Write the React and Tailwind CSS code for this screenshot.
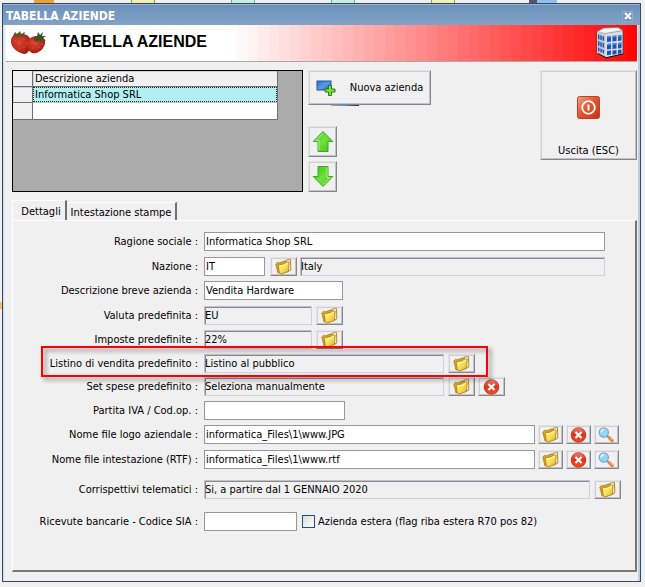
import { useState } from 'react'

const raised =
  'flex shrink-0 items-center justify-center bg-[#f0f0f0] border border-t-[#e4e4e4] border-l-[#e4e4e4] border-r-[#85858b] border-b-[#85858b] shadow-[inset_1px_1px_0_#cfcfd6,inset_-1px_-1px_0_#c2c2c6]'
const sunken =
  'h-[19px] bg-[#f0f0f0] border border-t-[#c0c0c6] border-l-[#c0c0c6] border-r-[#cfcfd8] border-b-[#cfcfd8] shadow-[inset_1px_1px_0_#8a8a8e] outline-none min-w-0'
const white = 'h-[19px] bg-white border border-[#97979c] px-px outline-none min-w-0'

function Folder() {
  return (
    <svg width="17" height="16" viewBox="0 0 17 16">
      <defs>
        <linearGradient id="fold" x1="0" y1="0" x2="1" y2="1">
          <stop offset="0" stopColor="#fff27a" />
          <stop offset="0.5" stopColor="#f8e05c" />
          <stop offset="1" stopColor="#dcaa20" />
        </linearGradient>
      </defs>
      <path d="M11 1.200l4.500-.7.300 10.500-3 1.500z" fill="#fffef2" stroke="#a87c14" strokeWidth=".9" />
      <path d="M.8 5l1.700-1.600 1.700.5L10 1.800l1 .8v9L3 14z" fill="#d8a428" stroke="#a87818" strokeWidth=".8" />
      <path d="M3.200 6.500l1.300-.9 5-.8 1.300-1.500 3.400-.4-.7 9.600-7.500 2.500-1.700-1z" fill="url(#fold)" stroke="#b08018" strokeWidth=".9" />
      <path d="M4.600 7l5.200-1 1.400-1.600 2-.3" stroke="#fffbc8" strokeWidth=".9" fill="none" />
    </svg>
  )
}

function Cancel() {
  return (
    <svg width="17" height="16" viewBox="0 0 16 16">
      <defs>
        <linearGradient id="red" x1="0" y1="0" x2="0" y2="1">
          <stop offset="0" stopColor="#f08a74" />
          <stop offset="0.45" stopColor="#e03018" />
          <stop offset="1" stopColor="#ff4a24" />
        </linearGradient>
      </defs>
      <circle cx="8" cy="8" r="7.300" fill="url(#red)" stroke="#b8342a" strokeWidth=".9" />
      <path d="M5.700 5.700l4.600 4.600M10.300 5.700l-4.600 4.600" stroke="#fff" strokeWidth="2.200" strokeLinecap="square" />
    </svg>
  )
}

function Lens() {
  return (
    <svg width="17" height="16" viewBox="0 0 17 16">
      <path d="M8.500 8.500l2.500 2" stroke="#7d8b9a" strokeWidth="2" />
      <path d="M11.200 10.600l3 3" stroke="#e8833a" strokeWidth="3.200" strokeLinecap="round" />
      <path d="M11.600 10.200l2.800 2.800" stroke="#ffc48c" strokeWidth="1" />
      <circle cx="5.800" cy="5.500" r="4.600" fill="#8fd6fa" stroke="#86a4bc" strokeWidth="1.200" />
      <path d="M3 5.500a3 3 0 0 1 3-3" stroke="#e6f8ff" strokeWidth="1.500" fill="none" />
    </svg>
  )
}

function Arrow({ down }) {
  return (
    <svg width="22" height="23" viewBox="0 0 22 23" className={down ? 'rotate-180' : ''}>
      <defs>
        <linearGradient id="green" x1="0" y1="0" x2="1" y2="1">
          <stop offset="0" stopColor="#5ccf2c" />
          <stop offset="0.5" stopColor="#6fe03a" />
          <stop offset="1" stopColor="#3db81c" />
        </linearGradient>
      </defs>
      <path d="M11 1.500L20.800 11.500H16V21.500H6V11.500H1.200z" fill="url(#green)" stroke="#3fa52c" strokeLinejoin="round" />
      <path d="M11 3.200L4 10.500h3V20.500" fill="none" stroke="#a4f078" strokeWidth="1" />
    </svg>
  )
}

function Strawberries() {
  return (
    <svg width="36" height="25" viewBox="0 0 36 25">
      <defs>
        <radialGradient id="berry" cx=".4" cy=".4" r=".7">
          <stop offset="0" stopColor="#dc452e" />
          <stop offset="0.600" stopColor="#bd2a1c" />
          <stop offset="1" stopColor="#861a14" />
        </radialGradient>
      </defs>
      <path d="M0 9C1 4 5 2 11 3c6 0 9 4 9 9 0 6-3 11-7 11C8 22-1 17 0 9z" fill="url(#berry)" />
      <path d="M17 10c2-5 9-6 14-4 4 2 4 7 1 11-2 4-8 6-11 5-4-2-6-7-4-12z" fill="url(#berry)" />
      <path d="M2 5l2-4 2 2 3-3 1 3 4-2-1 3 4 1-5 1-3-1-2 2-2-2z" fill="#5c5424" />
      <path d="M22 7l4-2 1-4 2 3 3-3-1 4 4 0-3 2 3 3-4-1-1 3-2-3-3 2z" fill="#3d5420" />
      <g fill="#e8835a">
        <circle cx="4" cy="10" r=".6" /><circle cx="8" cy="12" r=".6" /><circle cx="13" cy="8" r=".6" />
        <circle cx="8" cy="17" r=".6" /><circle cx="13" cy="16" r=".6" /><circle cx="16" cy="12" r=".6" />
        <circle cx="21" cy="11" r=".6" /><circle cx="25" cy="13" r=".6" /><circle cx="22" cy="17" r=".6" />
        <circle cx="28" cy="16" r=".6" /><circle cx="31" cy="13" r=".6" />
      </g>
    </svg>
  )
}

function Building() {
  return (
    <svg width="28" height="32" viewBox="0 0 28 32">
      <path d="M1 4.500L8 1l14-.5 5 3V27L11 31 1 26z" fill="#dcdce0" stroke="#444" strokeWidth=".8" />
      <path d="M1 4.500L9 6.500 27 3.500 22 .5 8 1z" fill="#f4f4f6" stroke="#777" strokeWidth=".6" />
      <path d="M1 4.500l8 2V30L1 26z" fill="#c4c8d0" />
      <path d="M2 26.500l8 4.200L27 27" stroke="#111" strokeWidth="1" fill="none" />
      <g fill="#1656b8">
        <path d="M11 9.500l4-.5v5.500l-4 .5zM16.500 9l4-.5V14l-4 .5zM22 8.500l3.500-.5v5.500L22 14z" />
        <path d="M11 17l4-.5V22l-4 .5zM16.500 16.500l4-.5v5.500l-4 .5zM22 16l3.500-.5V21l-3.500.5z" />
        <path d="M11 24l4-.5v4l-4 .8zM16.500 23.500l4-.5v4l-4 .7zM22 23l3.500-.5v4L22 27z" />
        <path d="M2 7.500l1.500.5v4.500L2 12zM4.300 8.200l1.500.5v4.500l-1.500-.5zM6.600 9l1.500.5V14l-1.500-.5z" />
        <path d="M2 14l1.500.5V19L2 18.500zM4.300 15l1.500.5V20l-1.500-.5zM6.600 15.700l1.500.5v4.500l-1.500-.5z" />
        <path d="M2 20.500l1.500.5v3.500L2 24zM4.300 21.500l1.500.5v3.500l-1.500-.5zM6.600 22.500l1.500.5v3.500L6.600 26z" />
      </g>
      <g fill="#4f8be0">
        <path d="M11 9.500l4-.5v1.500l-4 .5zM16.500 9l4-.5V10l-4 .5zM22 8.500l3.500-.5v1.500L22 10zM11 17l4-.5V18l-4 .5zM16.500 16.500l4-.5v1.500l-4 .5zM22 16l3.500-.5V17l-3.500.5z" />
      </g>
    </svg>
  )
}

function AddIcon() {
  return (
    <svg width="20" height="16" viewBox="0 0 20 16">
      <defs>
        <linearGradient id="screen" x1="0" y1="0" x2="1" y2="1">
          <stop offset="0" stopColor="#2a6cc4" />
          <stop offset="0.500" stopColor="#5b9be8" />
          <stop offset="1" stopColor="#1d55b0" />
        </linearGradient>
      </defs>
      <rect x="1" y="1" width="14" height="9" fill="url(#screen)" stroke="#2356a0" />
      <path d="M12.500 5.500h3v3.500h3.500v3H15.500v3.500h-3V12H9V9h3.500z" fill="#7fe03c" stroke="#237a18" strokeWidth="1" />
    </svg>
  )
}

function Power() {
  return (
    <svg width="23" height="23" viewBox="0 0 23 23">
      <defs>
        <linearGradient id="power" x1="0" y1="0" x2="1" y2="1">
          <stop offset="0" stopColor="#f0a088" />
          <stop offset="0.500" stopColor="#e2532c" />
          <stop offset="1" stopColor="#cc2f10" />
        </linearGradient>
      </defs>
      <rect x=".5" y=".5" width="22" height="22" rx="2" fill="url(#power)" stroke="#bb4426" />
      <circle cx="11.500" cy="11.500" r="6.300" fill="none" stroke="#fff" strokeWidth="1.800" />
      <path d="M11.500 8.500v6" stroke="#fff" strokeWidth="2" />
    </svg>
  )
}

const icons = { folder: Folder, cancel: Cancel, lens: Lens }
const names = { folder: 'Sfoglia', cancel: 'Elimina', lens: 'Visualizza' }
const bands = Array.from({ length: 39 }, (_, i) => Math.round(255 - (i * 248) / 38))

function IconButton({ icon, width = 'w-[27px]' }) {
  const Icon = icons[icon]
  return (
    <button type="button" aria-label={names[icon]} className={`${raised} h-[19px] ${width}`}>
      <Icon />
    </button>
  )
}

function Row({ id, label, className = 'mt-[5px]', children }) {
  return (
    <div className={`flex items-center h-[19px] ${className}`}>
      <label htmlFor={id} className="w-[185px] mr-[6px] shrink-0 text-right whitespace-nowrap">
        {label} :
      </label>
      {children}
    </div>
  )
}

export default function App() {
  const [tab, setTab] = useState('dettagli')
  const [estera, setEstera] = useState(false)

  return (
    <div className="min-h-screen bg-[#f0f0f0] pt-[3px] pl-[2px] pr-1 pb-1 font-['DejaVu_Sans_Condensed','DejaVu_Sans',sans-serif] text-[11px] leading-[14px] text-black relative">
      {/* Icone della finestra sottostante */}
      <div className="absolute top-0 left-0 right-0 h-[3px] overflow-hidden">
        <span className="absolute left-[34px] w-5 h-[3px] bg-[#f0a030]" />
        <span className="absolute left-[131px] w-6 h-[3px] bg-[#f2efb0] border-x border-[#9a9a30]" />
        <span className="absolute left-[231px] w-6 h-[3px] bg-[#c4f0dc] border-x border-[#5fb890]" />
        <span className="absolute left-[331px] w-6 h-[3px] bg-[#c4f0dc] border-x border-[#5fb890]" />
        <span className="absolute left-[431px] w-6 h-[3px] bg-[#f2efb0] border-x border-[#9a9a30]" />
        <span className="absolute left-[529px] w-7 h-[3px] bg-[#8fc0ee] border-l-8 border-[#555568]" />
      </div>
      <span className="absolute left-0 top-[302px] w-0.5 h-[7px] bg-[#f0c070]" />

      <div className="border border-[#2f4a66] bg-[#f0f0f0] shadow-[inset_1px_0_0_#cfdbe6,inset_-2px_0_0_#c0cedc]">
        {/* Barra del titolo */}
        <div className="flex items-center justify-between h-[21px] pl-[3px] pr-[7px] pt-0.5 bg-linear-to-b from-[#6c91ba] to-[#82a3c7] border-t border-[#9bb5d0]">
          <span className="font-bold text-[12px] text-white">TABELLA AZIENDE</span>
          <button type="button" aria-label="Chiudi" className="flex items-center justify-center size-[11px] bg-[#7395ba] border border-[#8facca]">
            <svg width="8" height="8" viewBox="0 0 8 8" className="shrink-0">
              <path d="M1 1l6 6M7 1L1 7" stroke="#fff" strokeWidth="2" />
            </svg>
          </button>
        </div>

        {/* Testata */}
        <header className="relative flex items-center justify-between mx-[3px] h-[37px] pl-[5px] pr-[13px] border-b border-[#a8a8a8] bg-white">
          <div className="absolute inset-y-0 right-0 left-[35%] flex">
            {bands.map((v, i) => (
              <span key={i} className="flex-1" style={{ backgroundColor: `rgb(255, ${v}, ${v})` }} />
            ))}
          </div>
          <div className="relative flex items-center gap-[13px]">
            <Strawberries />
            <h1 className="font-['Liberation_Sans',Arial,sans-serif] font-bold text-[16px] leading-5 pb-0.5">TABELLA AZIENDE</h1>
          </div>
          <div className="relative">
            <Building />
          </div>
        </header>

        <div className="flex items-start pl-[9px] pr-[3px] pt-2">
          <div className="flex-1 max-w-[291px] h-[122px] border border-black bg-[#ababab]">
            <table className="w-[265px] border-separate border-spacing-0 table-fixed leading-[15px]">
              <tbody>
                <tr className="h-4">
                  <td className="w-5 border-r border-b border-[#707074] bg-[#f0f0f0] p-0" />
                  <th className="border-r border-b border-[#707074] bg-[#f0f0f0] p-0 pl-0.5 text-left font-normal shadow-[inset_1px_1px_0_#cfcfd6]">Descrizione azienda</th>
                </tr>
                <tr className="h-4">
                  <td className="border-r border-b border-[#707074] bg-[#f0f0f0] p-0 shadow-[inset_1px_1px_0_#cfcfd6]" />
                  <td className="border-r border-b border-r-[#707074] border-b-[#c0c0c0] p-0">
                    <div className="h-[15px] leading-[13px] border border-dotted border-[#302020] bg-[#b0f0f0] pl-px">Informatica Shop SRL</div>
                  </td>
                </tr>
                <tr className="h-[17px]">
                  <td className="border-r border-b border-[#707074] bg-[#f0f0f0] p-0" />
                  <td className="border-r border-b border-[#707074] bg-white p-0" />
                </tr>
              </tbody>
            </table>
          </div>

          <div className="ml-[5px]">
            <button type="button" className={`${raised} w-[123px] h-[35px] gap-[14px]`}>
              <AddIcon />
              Nuova azienda
            </button>
            <div className="ml-[23px] w-7 h-px bg-linear-to-r from-[#b0a0a8] via-[#3f8fd0] to-[#303030]" />
            <button type="button" aria-label="Sposta su" className={`${raised} mt-5 w-[29px] h-[31px]`}>
              <Arrow />
            </button>
            <button type="button" aria-label="Sposta giù" className={`${raised} mt-1 w-[29px] h-[31px]`}>
              <Arrow down />
            </button>
          </div>

          <button type="button" className={`${raised} ml-auto w-[97px] h-[90px] flex-col gap-[25px] pt-6`}>
            <Power />
            Uscita (ESC)
          </button>
        </div>

        {/* Schede */}
        <div role="tablist" className="flex items-end pl-[9px] mt-2">
          <button type="button" role="tab" aria-selected={tab === 'dettagli'} onClick={() => setTab('dettagli')}
            className="w-[55px] h-5 pt-0.5 pl-1 rounded-tl-xs border-t border-l border-white border-r-2 border-r-[#707074]">
            Dettagli
          </button>
          <button type="button" role="tab" aria-selected={tab === 'stampe'} onClick={() => setTab('stampe')}
            className="w-[110px] h-[18px] pt-0.5 border-t border-white border-r-2 border-r-[#707074]">
            Intestazione stampe
          </button>
        </div>

        <form className="ml-[9px] mr-[3px] mb-[9px] pt-[11px] pb-[39px] border border-white border-r-2 border-b-2 border-r-[#77777b] border-b-[#77777b]">
          <Row id="ragione" label="Ragione sociale" className="pr-[30px]">
            <input id="ragione" defaultValue="Informatica Shop SRL" className={`${white} flex-1`} />
          </Row>
          <Row id="nazione" label="Nazione" className="mt-1.5 pr-[30px]">
            <input id="nazione" defaultValue="IT" className={`${white} w-[61px] mr-[5px]`} />
            <IconButton icon="folder" />
            <input aria-label="Nome nazione" readOnly defaultValue="Italy" className={`${sunken} flex-1 ml-[3px]`} />
          </Row>
          <Row id="breve" label="Descrizione breve azienda">
            <input id="breve" defaultValue="Vendita Hardware" className={`${white} w-[139px]`} />
          </Row>
          <Row id="valuta" label="Valuta predefinita" className="mt-1.5">
            <input id="valuta" readOnly defaultValue="EU" className={`${sunken} w-[108px] mr-1`} />
            <IconButton icon="folder" />
          </Row>
          <Row id="imposte" label="Imposte predefinite">
            <input id="imposte" readOnly defaultValue="22%" className={`${sunken} w-[108px] mr-1`} />
            <IconButton icon="folder" />
          </Row>
          <Row id="listino" label="Listino di vendita predefinito" className="mt-[5px] relative w-fit">
            <input id="listino" readOnly defaultValue="Listino al pubblico" className={`${sunken} w-[240px] mr-1`} />
            <IconButton icon="folder" />
            <span className="absolute z-10 -top-2 -bottom-1 left-7 -right-[13px] border-2 border-[#ff0000] drop-shadow-[3px_3px_2px_rgba(0,0,0,0.45)] pointer-events-none" />
          </Row>
          <Row id="spese" label="Set spese predefinito" className="mt-1">
            <input id="spese" readOnly defaultValue="Seleziona manualmente" className={`${sunken} w-[240px] mr-1`} />
            <IconButton icon="folder" />
            <span className="w-[3px]" />
            <IconButton icon="cancel" />
          </Row>
          <Row id="iva" label="Partita IVA / Cod.op.">
            <input id="iva" className={`${white} w-[141px]`} />
          </Row>
          <Row id="logo" label="Nome file logo aziendale" className="mt-[5px] pr-4">
            <input id="logo" defaultValue="informatica_Files\1\www.JPG" className={`${white} flex-1`} />
            <div className="flex gap-[3px] ml-[3px]">
              <IconButton icon="folder" width="w-[25px]" />
              <IconButton icon="cancel" width="w-[25px]" />
              <IconButton icon="lens" width="w-[25px]" />
            </div>
          </Row>
          <Row id="rtf" label="Nome file intestazione (RTF)" className="mt-1.5 pr-4">
            <input id="rtf" defaultValue="informatica_Files\1\www.rtf" className={`${white} flex-1`} />
            <div className="flex gap-[3px] ml-[3px]">
              <IconButton icon="folder" width="w-[25px]" />
              <IconButton icon="cancel" width="w-[25px]" />
              <IconButton icon="lens" width="w-[25px]" />
            </div>
          </Row>
          <Row id="telematici" label="Corrispettivi telematici" className="mt-[11px] pr-3.5">
            <input id="telematici" readOnly defaultValue="Si, a partire dal 1 GENNAIO 2020" className={`${sunken} flex-1 mr-1`} />
            <IconButton icon="folder" />
          </Row>
          <Row id="sia" label="Ricevute bancarie - Codice SIA" className="mt-[13px]">
            <input id="sia" className={`${white} w-[93px] mr-[5px]`} />
            <input id="estera" type="checkbox" checked={estera} onChange={(e) => setEstera(e.target.checked)}
              className="appearance-none size-[13px] shrink-0 border border-[#1c5180] bg-linear-to-br from-[#dcdcd7] to-white checked:from-[#1c5180]" />
            <label htmlFor="estera" className="ml-[3px] whitespace-nowrap">Azienda estera (flag riba estera R70 pos 82)</label>
          </Row>
        </form>
      </div>
    </div>
  )
}
